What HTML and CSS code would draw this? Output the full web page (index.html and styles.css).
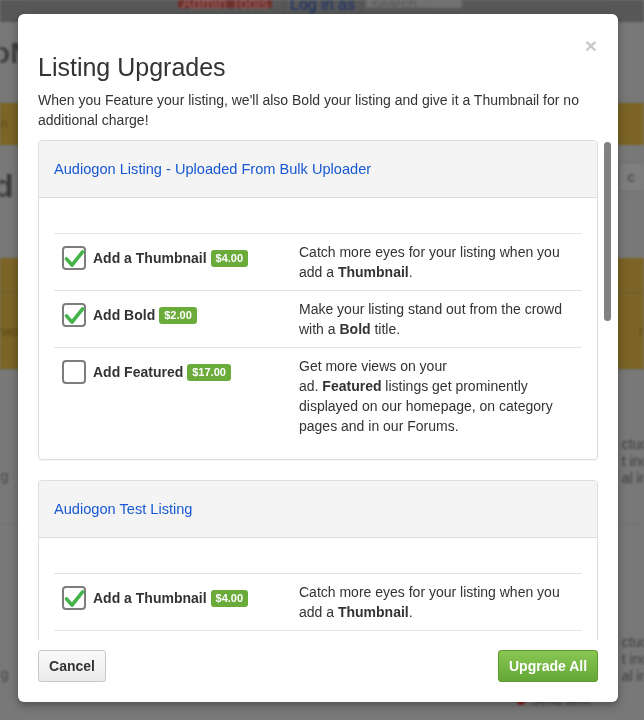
FILE: index.html
```html
<!DOCTYPE html>
<html lang="en">
<head>
<meta charset="utf-8">
<title>Listing Upgrades</title>
<link rel="stylesheet" href="styles.css">
</head>
<body>
<div class="page">
  <div class="nav">
    <span class="admin-btn">Admin Tools</span>
    <span class="login-link">Log in as</span>
    <span class="search-box">search...</span>
  </div>
  <div class="band band-hero"><span class="logo-frag">oN</span></div>
  <div class="band band-yellow band-a"><span class="frag-small">in</span></div>
  <div class="band band-gray band-b">
    <span class="big-d">d</span>
    <span class="bg-btn">c</span>
  </div>
  <div class="band band-yellow band-c"></div>
  <div class="band band-yellow band-d"><span class="frag-small">ned</span><span class="frag-small right-frag">n</span></div>
  <div class="band band-gray band-e">
    <div class="bg-row"><span class="frag-text">rg</span><span class="frag-lines">ctude<br>t inc<br>al inc</span></div>
    <div class="bg-row bg-row2"><span class="frag-text">rg</span><span class="frag-lines">ctude<br>t inc<br>al inc</span></div>
    <div class="send-item"><span class="red-dot"></span>Send item</div>
  </div>
</div>

<div class="modal">
  <span class="close">&times;</span>
  <div class="modal-header">
    <h1 class="modal-title">Listing Upgrades</h1>
    <p class="modal-intro">When you Feature your listing, we'll also Bold your listing and give it a Thumbnail for no additional charge!</p>
  </div>
  <div class="modal-body">
    <div class="card">
      <div class="card-header"><a class="card-link">Audiogon Listing - Uploaded From Bulk Uploader</a></div>
      <div class="card-body">
        <div class="row">
          <div class="opt">
            <span class="checkbox checked"><svg class="check" viewBox="0 0 24 24"><path d="M4.5 12.8 L10 19.2 L20.6 5.8"/></svg></span>
            <span class="opt-label">Add a Thumbnail</span>
            <span class="badge">$4.00</span>
          </div>
          <div class="desc">Catch more eyes for your listing when you add a <b>Thumbnail</b>.</div>
        </div>
        <div class="row">
          <div class="opt">
            <span class="checkbox checked"><svg class="check" viewBox="0 0 24 24"><path d="M4.5 12.8 L10 19.2 L20.6 5.8"/></svg></span>
            <span class="opt-label">Add Bold</span>
            <span class="badge">$2.00</span>
          </div>
          <div class="desc">Make your listing stand out from the crowd with a <b>Bold</b> title.</div>
        </div>
        <div class="row">
          <div class="opt">
            <span class="checkbox"></span>
            <span class="opt-label">Add Featured</span>
            <span class="badge">$17.00</span>
          </div>
          <div class="desc">Get more views on your<br>ad. <b>Featured</b> listings get prominently displayed on our homepage, on category pages and in our Forums.</div>
        </div>
      </div>
    </div>
    <div class="card">
      <div class="card-header"><a class="card-link">Audiogon Test Listing</a></div>
      <div class="card-body">
        <div class="row">
          <div class="opt">
            <span class="checkbox checked"><svg class="check" viewBox="0 0 24 24"><path d="M4.5 12.8 L10 19.2 L20.6 5.8"/></svg></span>
            <span class="opt-label">Add a Thumbnail</span>
            <span class="badge">$4.00</span>
          </div>
          <div class="desc">Catch more eyes for your listing when you add a <b>Thumbnail</b>.</div>
        </div>
        <div class="row">
          <div class="opt">
            <span class="checkbox checked"><svg class="check" viewBox="0 0 24 24"><path d="M4.5 12.8 L10 19.2 L20.6 5.8"/></svg></span>
            <span class="opt-label">Add Bold</span>
            <span class="badge">$2.00</span>
          </div>
          <div class="desc">Make your listing stand out from the crowd with a <b>Bold</b> title.</div>
        </div>
      </div>
    </div>
  </div>
  <span class="scroll-thumb"></span>
  <div class="modal-footer">
    <button class="btn btn-cancel">Cancel</button>
    <button class="btn btn-upgrade">Upgrade All</button>
  </div>
</div>
</body>
</html>
```

FILE: styles.css
```css
* { box-sizing: border-box; }

html, body {
  margin: 0;
  padding: 0;
  height: 720px;
  overflow: hidden;
}

body {
  background: #7a7a7a;
  font-family: "Liberation Sans", Arial, sans-serif;
  font-size: 14px;
  color: #333;
}

/* ---------- dimmed page behind the modal ---------- */
.page {
  filter: blur(1.1px);
}

.nav {
  height: 22px;
  background: #585858;
  border-bottom: 1px solid #525252;
  display: flex;
  align-items: flex-start;
  padding-left: 178px;
  overflow: hidden;
}

.admin-btn {
  width: 94px;
  height: 14px;
  margin-top: -6px;
  background: #6f302c;
  color: #9a6460;
  font-size: 16px;
  line-height: 20px;
  text-align: center;
  border-radius: 0 0 2px 2px;
}

.login-link {
  margin-left: 11px;
  padding-left: 6px;
  border-left: 1px solid #4c4c4c;
  height: 22px;
  margin-top: -6px;
  line-height: 22px;
  color: #16306a;
  font-size: 16px;
  padding-right: 6px;
  border-right: 1px solid #4c4c4c;
}

.search-box {
  margin-left: 4px;
  width: 96px;
  height: 14px;
  margin-top: -6px;
  background: #707070;
  color: #585858;
  font-size: 15px;
  line-height: 20px;
  padding-left: 6px;
  border-radius: 0 0 3px 3px;
}

.band {
  position: relative;
  display: flex;
  align-items: center;
  overflow: hidden;
}

.band-hero {
  height: 81px;
  background: #787878;
  border-bottom: 1px solid #707070;
}

.logo-frag {
  font-size: 30px;
  font-weight: bold;
  color: #3f3f3f;
  margin-left: -8px;
  margin-top: -18px;
}

.band-yellow {
  background: #7b6426;
}

.band-a { height: 42px; }

.frag-small {
  font-size: 12px;
  color: #5a4818;
  margin-left: -2px;
}

.band-b {
  height: 113px;
  background: #787878;
  justify-content: space-between;
}

.big-d {
  font-size: 32px;
  font-weight: bold;
  color: #3b3b3b;
  margin-left: -6px;
  margin-top: -30px;
}

.bg-btn {
  width: 44px;
  height: 30px;
  margin-right: -18px;
  margin-top: -50px;
  border: 1px solid #6d6d6d;
  background: #7e7e7e;
  border-radius: 3px;
  color: #555;
  font-size: 15px;
  font-weight: bold;
  line-height: 28px;
  padding-left: 8px;
}

.band-c {
  height: 36px;
  border-bottom: 2px solid #71602d;
}

.band-d {
  height: 76px;
  justify-content: space-between;
  border-bottom: 1px solid #6d6d6d;
}

.right-frag { margin-right: -2px; }

.band-e {
  height: 348px;
  background: #787878;
  flex-direction: column;
  align-items: stretch;
  justify-content: flex-start;
}

.bg-row {
  margin-top: 66px;
  display: flex;
  justify-content: space-between;
  align-items: center;
  border-bottom: 1px solid #727272;
  padding-bottom: 36px;
}

.bg-row2 {
  margin-top: 110px;
  padding-bottom: 0;
  border-bottom: 0;
}

.frag-text {
  font-size: 14px;
  color: #4a4a4a;
  margin-left: -4px;
  margin-top: 28px;
}

.frag-lines {
  font-size: 14px;
  line-height: 17px;
  color: #3e3e3e;
  margin-right: -12px;
}

.send-item {
  align-self: flex-end;
  margin-right: 54px;
  margin-top: 8px;
  color: #3e3e3e;
  font-size: 13px;
  display: flex;
  align-items: center;
  gap: 6px;
}

.red-dot {
  width: 8px;
  height: 8px;
  border-radius: 50%;
  background: #8a1c1c;
}

/* ---------- modal ---------- */
.modal {
  position: fixed;
  left: 18px;
  top: 14px;
  width: 600px;
  height: 688px;
  background: #fff;
  border-radius: 6px;
  box-shadow: 0 3px 9px rgba(0, 0, 0, 0.35);
  display: flex;
  flex-direction: column;
}

.close {
  position: absolute;
  top: 20px;
  right: 21px;
  font-size: 21px;
  font-weight: bold;
  line-height: 24px;
  color: #c9c9c9;
}

.modal-header {
  padding: 40px 20px 0;
}

.modal-title {
  margin: 0;
  font-size: 25px;
  font-weight: normal;
  line-height: 27px;
  color: #333;
}

.modal-intro {
  margin: 9px 0 10px;
  line-height: 20px;
}

.modal-body {
  height: 500px;
  flex: none;
  overflow: hidden;
  padding: 0 20px;
}

.scroll-thumb {
  position: absolute;
  left: 586px;
  top: 128px;
  width: 7px;
  height: 179px;
  border-radius: 4px;
  background: #818181;
}

.card {
  border: 1px solid #ddd;
  border-radius: 4px;
  box-shadow: 0 1px 1px rgba(0, 0, 0, 0.05);
  margin-bottom: 20px;
  overflow: hidden;
}

.card-header {
  background: #f4f4f4;
  border-bottom: 1px solid #ddd;
  padding: 18px 15px;
  line-height: 20px;
}

.card-link {
  color: #1859d3;
  font-size: 14.6px;
}

.card-body {
  padding: 35px 15px 15px;
}

.row {
  display: grid;
  grid-template-columns: 237px 1fr;
  border-top: 1px solid #e3e3e3;
}

.opt {
  padding: 12px 8px 8px;
  display: flex;
  align-items: center;
  align-self: start;
}

.desc {
  padding: 8px;
  line-height: 20px;
}

.checkbox {
  position: relative;
  width: 24px;
  height: 24px;
  flex: none;
  border: 2px solid #7d7d7d;
  border-radius: 4px;
}

.check {
  position: absolute;
  left: -2px;
  top: -2px;
  width: 24px;
  height: 24px;
  overflow: visible;
}

.check path {
  fill: none;
  stroke: #45b24a;
  stroke-width: 3.6;
  stroke-linecap: round;
  stroke-linejoin: round;
}

.opt-label {
  margin-left: 7px;
  font-weight: bold;
  line-height: 20px;
  white-space: nowrap;
}

.badge {
  margin-left: 4px;
  background: #6aab3a;
  color: #fff;
  font-size: 11px;
  font-weight: bold;
  line-height: 13px;
  padding: 2px 5px;
  border-radius: 3px;
  white-space: nowrap;
}

.modal-footer {
  flex: 1;
  display: flex;
  justify-content: space-between;
  align-items: flex-start;
  padding: 10px 20px 20px;
}

.btn {
  height: 32px;
  font-family: "Liberation Sans", Arial, sans-serif;
  font-size: 14px;
  font-weight: bold;
  border-radius: 3px;
  padding: 0 6px;
  line-height: 30px;
  white-space: nowrap;
  text-align: center;
}

.btn-cancel {
  width: 68px;
  color: #333;
  background: linear-gradient(#fafafa, #ebebeb);
  border: 1px solid #c8c8c8;
}

.btn-upgrade {
  width: 100px;
  color: #fff;
  background: linear-gradient(#8ac653, #63a836);
  border: 1px solid #5c9b31;
}
```
